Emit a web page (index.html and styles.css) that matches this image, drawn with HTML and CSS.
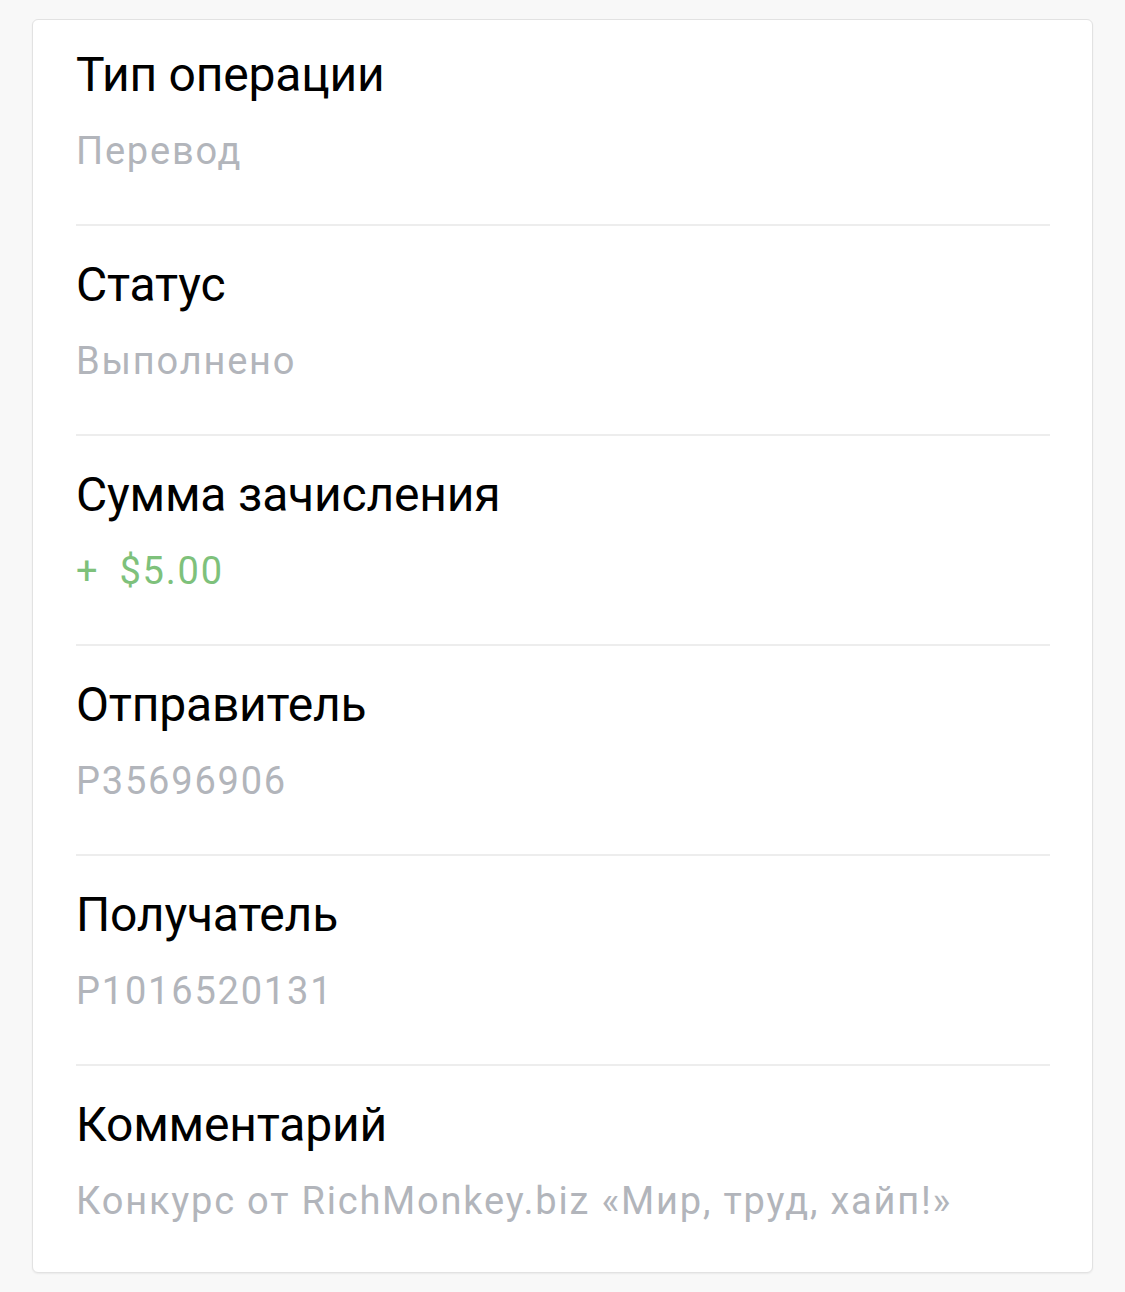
FILE: index.html
```html
<!DOCTYPE html>
<html lang="ru">
<head>
<meta charset="UTF-8" />
<meta name="viewport" content="width=device-width, initial-scale=1" />
<title>Детали операции</title>
<link rel="stylesheet" href="styles.css">
</head>
<body>
  <div class="page">
    <div class="card">
      <div class="row">
        <div class="label">Тип операции</div>
        <div class="value">Перевод</div>
      </div>
      <div class="row">
        <div class="label">Статус</div>
        <div class="value">Выполнено</div>
      </div>
      <div class="row">
        <div class="label">Сумма зачисления</div>
        <div class="value income"><span class="sign">+</span>$5.00</div>
      </div>
      <div class="row">
        <div class="label">Отправитель</div>
        <div class="value">P35696906</div>
      </div>
      <div class="row">
        <div class="label">Получатель</div>
        <div class="value">P1016520131</div>
      </div>
      <div class="row">
        <div class="label">Комментарий</div>
        <div class="value">Конкурс от RichMonkey.biz «Мир, труд, хайп!»</div>
      </div>
    </div>
  </div>
</body>
</html>
```

FILE: styles.css
```css
body, html {
  margin: 0; padding: 0;
  background: #f8f8f8;
  font-family: Roboto, "Noto Sans", Arial, sans-serif;
}
.page {
  padding: 19px 32px 17px;
}
.card {
  background: #fff;
  border: 1px solid #e2e2e2;
  border-radius: 6px;
  box-shadow: 0 1px 2px rgba(0, 0, 0, 0.06);
  padding: 0 42px 0 43px;
}
.row {
  padding: 31px 0 49px;
  border-bottom: 2px solid #ededed;
}
.row:first-child {
  padding-top: 27px;
}
.row:last-child {
  border-bottom: none;
  padding-bottom: 47px;
}
.label {
  font-size: 48px;
  line-height: 56px;
  letter-spacing: -0.2px;
  color: #000;
}
.value {
  margin-top: 25px;
  font-size: 38px;
  line-height: 47px;
  letter-spacing: 1.8px;
  color: #b2b5bb;
}
.value.income {
  color: #7ec17b;
}
.sign {
  margin-right: 20px;
}
```
